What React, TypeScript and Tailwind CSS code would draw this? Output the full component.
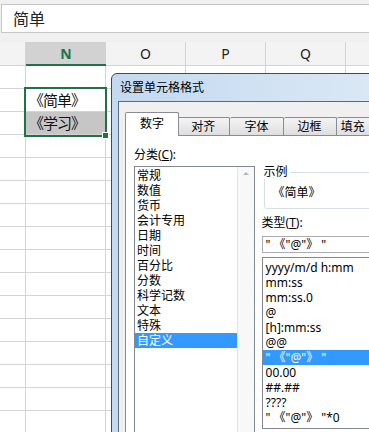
import React from "react";

const font = "font-['Noto_Sans','Noto_Sans_CJK_SC',sans-serif]";

const categories = ["常规", "数值", "货币", "会计专用", "日期", "时间", "百分比", "分数", "科学记数", "文本", "特殊", "自定义"];
const types = ["yyyy/m/d h:mm", "mm:ss", "mm:ss.0", "@", "[h]:mm:ss", "@@", '" 《"@"》 "', "00.00", "##.##", "????", '" 《"@"》 "*0'];

function Sheet() {
  const rows = Array.from({ length: 16 }, (_, i) => i);
  return (
    <div>
      {/* column headers */}
      <div className="flex h-[24px] bg-[#f3f3f3] text-[14px] text-[#222]">
        <div className="w-[26px] border-r border-b border-[#d4d4d4]" />
        <div className="w-[80px] bg-[#d2d2d2] border-b-2 border-[#217346] flex items-center justify-center font-bold text-[#217346]">N</div>
        {["O", "P", "Q"].map((c) => (
          <div key={c} className="w-[80px] border-r border-b border-[#d4d4d4] flex items-center justify-center">
            {c}
          </div>
        ))}
        <div className="flex-1 border-b border-[#d4d4d4]" />
      </div>
      {rows.map((r) => (
        <div key={r} className="flex h-[23px] border-b border-[#d4d4d4] text-[15px] leading-[22px] text-[#111]">
          <div className="w-[26px] border-r border-[#d4d4d4]" />
          <div className={`w-[80px] border-r border-[#d4d4d4] pl-[3px] tracking-[-1px] ${r === 2 ? "bg-[#c6c6c6]" : ""}`}>
            {r === 1 ? "《简单》" : r === 2 ? "《学习》" : ""}
          </div>
          <div className="w-[80px] border-r border-[#d4d4d4]" />
          <div className="w-[80px] border-r border-[#d4d4d4]" />
          <div className="w-[80px] border-r border-[#d4d4d4]" />
          <div className="flex-1" />
        </div>
      ))}
    </div>
  );
}

function Dialog() {
  return (
    <div className="absolute left-[111px] top-[73px] w-[280px] h-[420px] rounded-tl-[6px] border border-[#3a4c60] bg-gradient-to-r from-[#c3d9ef] to-[#dce9f6] flex flex-col">
      <div className="shrink-0 h-[27px] flex items-center pl-[8px] text-[12px] text-black">设置单元格格式</div>
      <div className="flex-1 ml-[6px] border-l border-t border-[#5b6b7c] bg-[#f0f0f0] pl-[6px] pt-[10px] flex flex-col">
        {/* tabs */}
        <div className="shrink-0 flex items-end h-[23px] text-[12px] text-black">
          <div className="relative z-10 w-[56px] h-[24px] -mb-px border border-b-0 border-[#898c95] rounded-t-[2px] bg-white flex items-center justify-center pb-[2px]">
            数字
          </div>
          {["对齐", "字体", "边框"].map((t, i) => (
            <div
              key={t}
              className={`h-[18px] w-[55px] border-t border-r border-[#898c95] rounded-t-[2px] bg-gradient-to-b from-[#f4f4f4] to-[#dedede] flex items-center justify-center ${i === 0 ? "-ml-[2px]" : ""}`}
            >
              {t}
            </div>
          ))}
          <div className="h-[18px] w-[55px] border-t border-r border-[#898c95] rounded-t-[2px] bg-gradient-to-b from-[#f4f4f4] to-[#dedede] flex items-center pl-[4px]">
            填充
          </div>
        </div>
        {/* panel */}
        <div className="flex-1 border border-[#898c95] bg-white pl-[8px] pt-[12px] flex text-[12px] text-black">
          <div className="w-[123px] flex flex-col">
            <div className="leading-[14px]">
              分类(<span className="underline">C</span>):
            </div>
            <div className="shrink-0 mt-[4px] h-[300px] border border-[#828790] flex">
              <div className="w-[102px] pt-[1px]">
                {categories.map((c, i) => (
                  <div key={c} className={`h-[15px] leading-[15px] pl-[2px] ${i === categories.length - 1 ? "bg-[#3399ff] text-white" : ""}`}>
                    {c}
                  </div>
                ))}
              </div>
              <div className="flex-1 bg-[#f8f8f8] border-l border-[#e3e3e3] flex justify-center pt-[5px]">
                <div className="w-0 h-0 border-l-[3px] border-r-[3px] border-b-[3px] border-l-transparent border-r-transparent border-b-[#b5b5b5]" />
              </div>
            </div>
          </div>
          <div className="ml-[7px] w-[130px] flex flex-col">
            <div className="shrink-0 relative mt-[24px] ml-[2px] h-[37px] border border-[#d5dfe5] rounded-[3px] pl-[8px] pt-[13px] leading-[14px]">
              <div className="absolute -top-[8px] -left-[1px] bg-white pr-[2px] leading-[14px]">示例</div>
              《简单》
            </div>
            <div className="mt-[7px] leading-[14px]">
              类型(<span className="underline">T</span>):
            </div>
            <div className="shrink-0 mt-[6px] h-[17px] border border-[#abadb3] leading-[15px] pl-[3px]">{'" 《"@"》 "'}</div>
            <div className="shrink-0 mt-[4px] h-[172px] border border-[#828790] pt-[2px]">
              {types.map((t, i) => (
                <div key={t} className={`h-[15px] leading-[15px] pl-[3px] ${i === 6 ? "bg-[#3399ff] text-white" : ""}`}>
                  {t}
                </div>
              ))}
            </div>
          </div>
        </div>
      </div>
    </div>
  );
}

export default function App() {
  return (
    <div className={`relative w-[369px] h-[432px] overflow-hidden bg-white ${font}`}>
      <div className="h-[42px] bg-[#f0f0f0] pt-[4px] pl-[1px]">
        <div className="h-[29px] bg-white border border-[#c6c6c6] border-r-0 flex items-center pl-[11px] text-[16px] text-[#222]">简单</div>
      </div>
      <Sheet />
      {/* selection border and fill handle */}
      <div className="absolute left-[24px] top-[87px] w-[83px] h-[50px] border-2 border-[#217346]" />
      <div className="absolute left-[102px] top-[132px] w-[7px] h-[7px] bg-[#217346] border border-white" />
      <Dialog />
    </div>
  );
}
